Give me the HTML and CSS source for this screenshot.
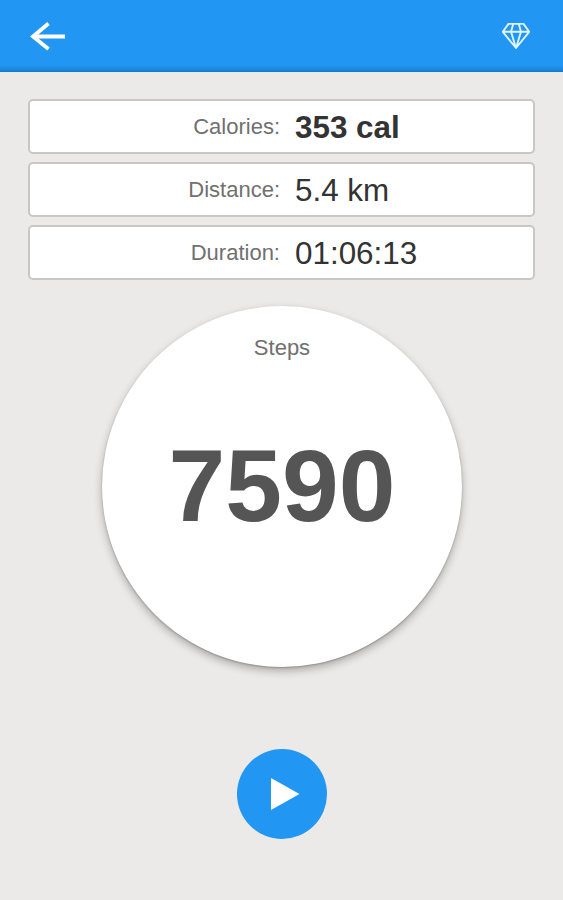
FILE: index.html
```
<!DOCTYPE html>
<html lang="en">
<head>
<meta charset="utf-8">
<title>Steps</title>
<link rel="stylesheet" href="styles.css">
</head>
<body>

<header class="toolbar">
    <svg class="back" width="38" height="32" viewBox="0 0 38 32">
        <path d="M20.5 3.5 L5 16.5 L20.5 29 M5 16.5 H37" />
    </svg>
    <svg class="gem" width="30" height="28" viewBox="0 0 30 28">
        <path d="M7.5 1.9 H22.5 L28.2 9.8 L15 26 L1.8 9.8 Z M1.8 9.8 H28.2 M12.2 1.9 L10 9.8 L15 26 L20 9.8 L17.8 1.9" />
    </svg>
</header>

<div class="stats">
    <div class="stat">
        <span class="label">Calories:</span>
        <span class="value strong">353 cal</span>
    </div>
    <div class="stat">
        <span class="label">Distance:</span>
        <span class="value">5.4 km</span>
    </div>
    <div class="stat">
        <span class="label">Duration:</span>
        <span class="value">01:06:13</span>
    </div>
</div>

<div class="dial">
    <span class="caption">Steps</span>
    <span class="count">7590</span>
</div>

<div class="play">
    <svg width="30" height="34" viewBox="0 0 30 34">
        <path d="M1 1 L29.5 17 L1 33 Z" />
    </svg>
</div>

</body>
</html>
```

FILE: styles.css
```
* {
    box-sizing: border-box;
}

body {
    margin: 0;
    height: 900px;
    overflow: hidden;
    background: #ebeae8;
    font-family: "Liberation Sans", Arial, sans-serif;
}

.toolbar {
    display: flex;
    justify-content: space-between;
    height: 72px;
    padding: 20px 32px 0 28px;
    background: linear-gradient(#2196f3 65px, #1b86dc 70px, #1576c6 72px);
}

.toolbar path {
    fill: none;
    stroke: #fff;
}

.back path {
    stroke-width: 3.8;
}

.gem {
    margin-top: 2px;
}

.gem path {
    stroke: #e0f3ff;
    stroke-width: 1.9;
    stroke-linejoin: round;
}

.stats {
    display: flex;
    flex-direction: column;
    gap: 8px;
    margin: 27px 28px 0;
}

.stat {
    display: flex;
    align-items: flex-start;
    height: 55px;
    padding-top: 9px;
    border: 2px solid #c8c7c5;
    border-radius: 5px;
    background: #fff;
}

.label {
    width: 250px;
    text-align: right;
    font-size: 22px;
    line-height: 34px;
    color: #707070;
}

.value {
    margin-left: 15px;
    font-size: 31.4px;
    line-height: 36px;
    color: #333;
}

.strong {
    font-weight: bold;
}

.dial {
    display: flex;
    flex-direction: column;
    align-items: center;
    width: 360px;
    height: 361px;
    margin: 26px 0 0 102px;
    padding-top: 29px;
    border-radius: 50%;
    background: #fff;
    box-shadow: 0 4px 9px rgba(0, 0, 0, 0.28), 0 1px 2px rgba(0, 0, 0, 0.22);
}

.caption {
    font-size: 22px;
    line-height: 26px;
    color: #707070;
}

.count {
    margin-top: 65px;
    font-size: 102px;
    line-height: 120px;
    font-weight: bold;
    color: #555;
}

.play {
    display: flex;
    align-items: center;
    width: 90px;
    height: 90px;
    margin: 82px 0 0 237px;
    padding-left: 33px;
    border-radius: 50%;
    background: #2196f3;
}

.play path {
    fill: #fff;
}
```
